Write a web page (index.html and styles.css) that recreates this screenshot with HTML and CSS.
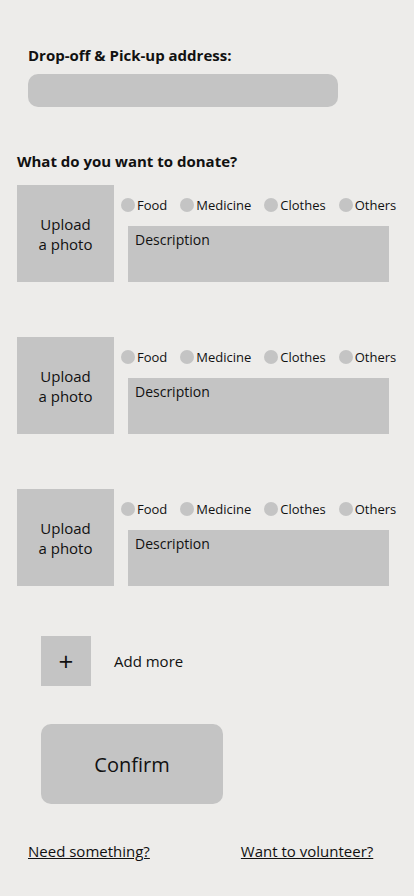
FILE: index.html
```html
<!DOCTYPE html>
<html lang="en">
<head>
<meta charset="utf-8">
<title>Donate</title>
<link rel="stylesheet" href="styles.css">
</head>
<body>
<main class="page">
  <section class="address">
    <h2 class="label">Drop-off &amp; Pick-up address:</h2>
    <div class="address-input"></div>
  </section>

  <section class="donate">
    <h2 class="label donate-title">What do you want to donate?</h2>

    <div class="item">
      <div class="upload">Upload<br>a photo</div>
      <div class="item-body">
        <div class="types">
          <span class="type"><span class="dot"></span>Food</span>
          <span class="type"><span class="dot"></span>Medicine</span>
          <span class="type"><span class="dot"></span>Clothes</span>
          <span class="type"><span class="dot"></span>Others</span>
        </div>
        <div class="desc">Description</div>
      </div>
    </div>

    <div class="item">
      <div class="upload">Upload<br>a photo</div>
      <div class="item-body">
        <div class="types">
          <span class="type"><span class="dot"></span>Food</span>
          <span class="type"><span class="dot"></span>Medicine</span>
          <span class="type"><span class="dot"></span>Clothes</span>
          <span class="type"><span class="dot"></span>Others</span>
        </div>
        <div class="desc">Description</div>
      </div>
    </div>

    <div class="item">
      <div class="upload">Upload<br>a photo</div>
      <div class="item-body">
        <div class="types">
          <span class="type"><span class="dot"></span>Food</span>
          <span class="type"><span class="dot"></span>Medicine</span>
          <span class="type"><span class="dot"></span>Clothes</span>
          <span class="type"><span class="dot"></span>Others</span>
        </div>
        <div class="desc">Description</div>
      </div>
    </div>
  </section>

  <div class="add-more">
    <div class="plus">+</div>
    <span class="add-text">Add more</span>
  </div>

  <div class="confirm">Confirm</div>

  <nav class="links">
    <a class="link" href="#">Need something?</a>
    <a class="link" href="#">Want to volunteer?</a>
  </nav>
</main>
</body>
</html>
```

FILE: styles.css
```css
html, body {
  margin: 0;
  padding: 0;
  background: #edecea;
}

body {
  font-family: "Open Sans", "Liberation Sans", sans-serif;
  color: #111;
  width: 414px;
  height: 896px;
  overflow: hidden;
}

.page {
  display: flex;
  flex-direction: column;
  padding-top: 45px;
}

.label {
  margin: 0;
  font-size: 15px;
  font-weight: 700;
  line-height: 20px;
}

.address {
  padding-left: 28px;
}

.address-input {
  margin-top: 9px;
  width: 310px;
  height: 33px;
  border-radius: 10px;
  background: #c4c4c4;
}

.donate {
  padding-left: 17px;
  margin-top: 44px;
}

.donate-title {
  margin-bottom: 14px;
}

.item {
  display: flex;
  margin-bottom: 55px;
}

.upload {
  width: 97px;
  height: 97px;
  background: #c4c4c4;
  display: flex;
  align-items: center;
  justify-content: center;
  text-align: center;
  font-size: 15px;
  line-height: 20px;
}

.item-body {
  display: flex;
  flex-direction: column;
  padding-left: 7px;
}

.types {
  display: flex;
  height: 20px;
  align-items: center;
  margin-top: 10px;
  font-size: 13px;
}

.type {
  display: flex;
  align-items: center;
  margin-right: 13px;
}

.dot {
  width: 14px;
  height: 14px;
  border-radius: 50%;
  background: #c4c4c4;
  margin-right: 2px;
}

.desc {
  margin-top: 11px;
  margin-left: 7px;
  width: 261px;
  height: 56px;
  box-sizing: border-box;
  background: #c4c4c4;
  padding: 4px 7px;
  font-size: 14px;
  line-height: 20px;
}

.add-more {
  display: flex;
  align-items: center;
  padding-left: 41px;
  margin-top: -5px;
}

.plus {
  width: 50px;
  height: 50px;
  background: #c4c4c4;
  display: flex;
  align-items: center;
  justify-content: center;
  font-size: 26px;
  line-height: 1;
}

.add-text {
  margin-left: 23px;
  font-size: 15px;
}

.confirm {
  margin-top: 38px;
  margin-left: 41px;
  width: 182px;
  height: 80px;
  border-radius: 10px;
  background: #c4c4c4;
  display: flex;
  align-items: center;
  justify-content: center;
  font-size: 20px;
}

.links {
  display: flex;
  padding-left: 28px;
  margin-top: 36px;
  gap: 91px;
}

.link {
  color: #111;
  font-size: 15px;
  line-height: 22px;
  text-decoration: underline;
}
```
